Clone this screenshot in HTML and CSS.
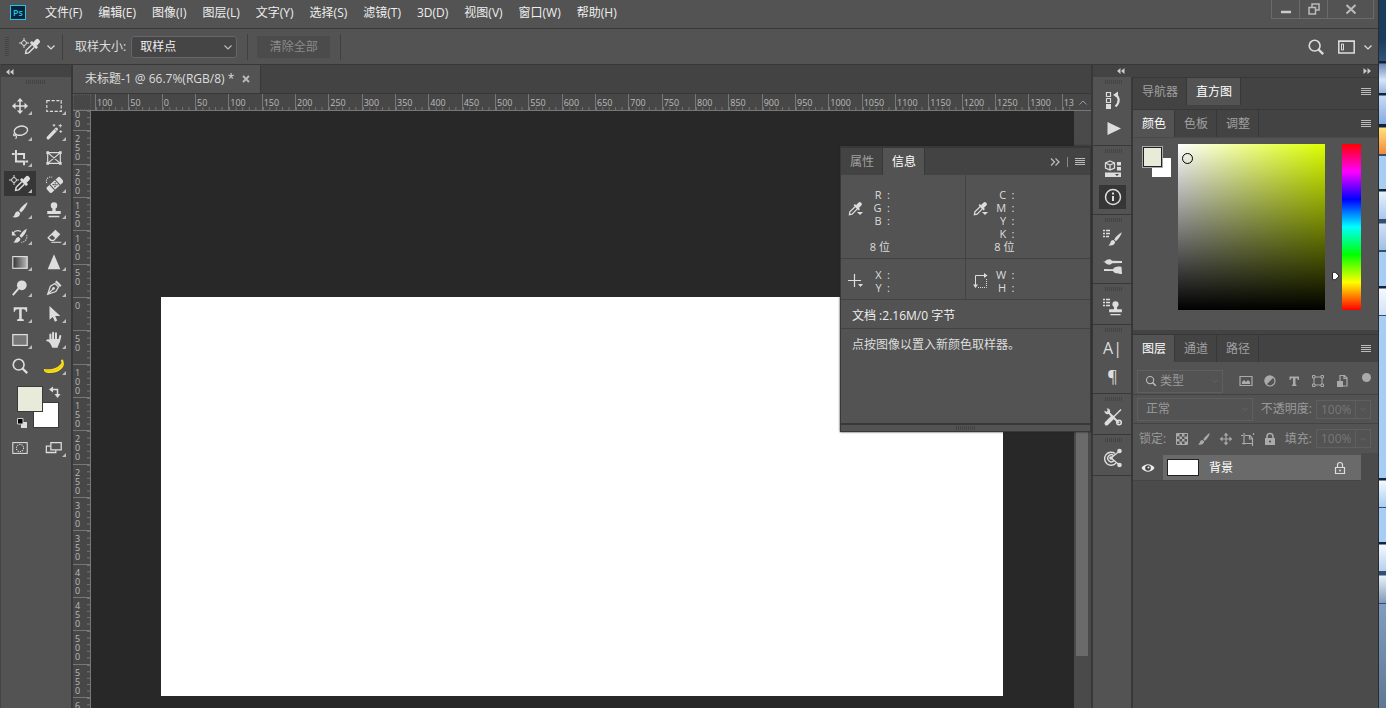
FILE: index.html
```html
<!DOCTYPE html>
<html lang="zh-CN">
<head>
    <meta charset="UTF-8">
    <meta name="viewport" content="width=device-width, initial-scale=1.0">
    <title>未标题-1</title>
    <link rel="stylesheet" href="styles.css">
</head>
<body>
    <!-- 公用图标 -->
    <svg class="symbols" aria-hidden="true">
        <symbol id="dropper" viewBox="0 0 16 16">
            <g transform="rotate(45 8 8)">
                <rect x="5.7" y="-2" width="4.6" height="7" rx="2.2" fill="currentColor"/>
                <rect x="3.8" y="4" width="8.4" height="2.4" rx="1" fill="currentColor"/>
                <path d="M6.2 6.5v8l1.8 2.6 1.8-2.6v-8" fill="none" stroke="currentColor" stroke-width="1.4"/>
            </g>
        </symbol>
        <symbol id="sampler" viewBox="0 0 22 20">
            <circle cx="5" cy="6" r="2.4" fill="none" stroke="currentColor"/>
            <path d="M5 1v3M5 8v3M0 6h3M7 6h3" stroke="currentColor"/>
            <g transform="translate(5 2)">
                <g transform="rotate(45 8 8)">
                    <rect x="5.5" y="-2" width="5" height="7" rx="2" fill="currentColor"/>
                    <rect x="3.5" y="3.800" width="9" height="2.800" rx="1" fill="currentColor"/>
                    <path d="M6.2 6.5v8l1.8 2.6 1.8-2.6v-8" fill="none" stroke="currentColor" stroke-width="1.4"/>
                </g>
            </g>
        </symbol>
        <symbol id="chevron" viewBox="0 0 8 8">
            <path d="M.5 2.5 4 6l3.500-3.500" fill="none" stroke="currentColor" stroke-width="1.200"/>
        </symbol>
        <symbol id="lines" viewBox="0 0 10 8">
            <path d="M0 .5h10M0 2.5h10M0 4.500h10M0 6.500h10" stroke="currentColor"/>
        </symbol>
        <symbol id="move" viewBox="0 0 20 20">
            <path d="M10 4v12M4 10h12" stroke="currentColor" stroke-width="1.700"/>
            <path d="M10 1l3.500 4h-7zM10 19l3.500-4h-7zM1 10l4-3.500v7zM19 10l-4-3.500v7z" fill="currentColor"/>
        </symbol>
        <symbol id="glass" viewBox="0 0 20 20">
            <circle cx="8.500" cy="8.500" r="6" fill="none" stroke="currentColor" stroke-width="1.800"/>
            <path d="M12.500 12.500 18 18" stroke="currentColor" stroke-width="2.600"/>
        </symbol>
        <symbol id="brush" viewBox="0 0 20 20">
            <path d="M18.500 1.500c-3 1.500-7.500 5.500-9.500 9l2.200 2.200c3.300-2.700 6.500-7.700 7.300-11.200z" fill="currentColor"/>
            <path d="M8 11.300c-2 0-3 1-3.600 2.800-.5 1.700-1.200 2.900-2.900 3.600 3.500 1.200 8.300.4 8.700-4.200z" fill="currentColor"/>
        </symbol>
        <symbol id="stamp" viewBox="0 0 20 20">
            <circle cx="10" cy="5" r="3.600" fill="currentColor"/>
            <path d="M8.500 7h3l.5 4h-4zM2.500 11h15v3.500h-15zM4 16.500h12V18H4z" fill="currentColor"/>
        </symbol>
    </svg>

    <div class="app">
        <header class="menubar">
            <svg class="logo" viewBox="0 0 16 15" aria-hidden="true">
                <rect x=".5" y=".5" width="15" height="14" fill="#06243a" stroke="#25c3e8"/>
                <text class="logo-text" x="3" y="11">Ps</text>
            </svg>
            <nav class="menus">
                <button>文件(F)</button>
                <button>编辑(E)</button>
                <button>图像(I)</button>
                <button>图层(L)</button>
                <button>文字(Y)</button>
                <button>选择(S)</button>
                <button>滤镜(T)</button>
                <button>3D(D)</button>
                <button>视图(V)</button>
                <button>窗口(W)</button>
                <button>帮助(H)</button>
            </nav>
            <div class="window-buttons">
                <button aria-label="最小化"><svg width="12" height="12" viewBox="0 0 12 12"><path d="M1 9h10" stroke="#ccc" stroke-width="2.500"/></svg></button>
                <button aria-label="还原"><svg width="12" height="12" viewBox="0 0 12 12"><path d="M4 4V1h7v6H8M1 4.500h6.500V11H1z" fill="none" stroke="#bbb" stroke-width="1.500"/></svg></button>
                <button class="close" aria-label="关闭"><svg width="12" height="12" viewBox="0 0 12 12"><path d="M1.500 2l9 8.500M10.500 2l-9 8.500" stroke="#bbb" stroke-width="2"/></svg></button>
            </div>
        </header>

        <div class="options">
            <span class="grip-v"></span>
            <button class="current-tool" aria-label="吸管工具">
                <svg width="22" height="20"><use href="#sampler"/></svg>
                <svg width="8" height="8"><use href="#chevron"/></svg>
            </button>
            <span class="sep"></span>
            <label class="options-label" for="sample-size">取样大小:</label>
            <div class="select sample">
                <select id="sample-size"><option>取样点</option></select>
                <svg class="arrow" width="8" height="8"><use href="#chevron"/></svg>
            </div>
            <span class="sep"></span>
            <button class="clear-all" disabled>清除全部</button>
            <span class="sep"></span>
            <div class="options-right">
                <button aria-label="搜索"><svg width="18" height="18"><use href="#glass"/></svg></button>
                <button aria-label="工作区"><svg width="17" height="14" viewBox="0 0 17 14"><path d="M.8 1h15.400v12H.8z" fill="none" stroke="currentColor" stroke-width="1.500"/><path d="M3.500 4h2v6h-2zM0 1.500h17" fill="none" stroke="currentColor"/></svg></button>
                <button aria-label="工作区列表"><svg width="8" height="8"><use href="#chevron"/></svg></button>
            </div>
        </div>

        <div class="workspace">
            <!-- 工具栏 -->
            <aside class="toolbar">
                <div class="collapse">
                    <svg width="8" height="6" viewBox="0 0 8 6"><path d="M3.500 0v6L0 3zM7.500 0v6L4 3z" fill="#ccc"/></svg>
                </div>
                <span class="grip"></span>
                <div class="tools">
                    <button class="tool more" aria-label="移动"><svg><use href="#move"/></svg></button>
                    <button class="tool more" aria-label="矩形选框"><svg viewBox="0 0 20 20"><rect x="2" y="4" width="16" height="12" fill="none" stroke="currentColor" stroke-width="1.300" stroke-dasharray="3.500 1.800"/></svg></button>
                    <button class="tool more" aria-label="套索"><svg viewBox="0 0 20 20"><ellipse cx="11" cy="8.500" rx="7.500" ry="5" transform="rotate(-12 11 8.500)" fill="none" stroke="currentColor" stroke-width="1.500"/><path d="M5 12c-2.500-.5-2.800 2-1 2.200 2 .2 2-2 .8-2.200M5.500 14c1 1 .8 2.500-.5 3.500" fill="none" stroke="currentColor" stroke-width="1.200"/></svg></button>
                    <button class="tool more" aria-label="魔棒"><svg viewBox="0 0 20 20"><path d="M3.500 16.500 12.500 7" stroke="currentColor" stroke-width="3.600" stroke-linecap="round"/><path d="M11 7l2 2" stroke="#535353"/><path d="M10 1v3M8.500 2.500h3M17 1v4M15 3h4M17.500 8v3M16 9.500h3" stroke="currentColor"/></svg></button>
                    <button class="tool more" aria-label="裁剪"><svg viewBox="0 0 20 20"><path d="M5.500 1v13H15M1 5.500h3M7 5.500h7.500V11M14.500 13v5M16 14h3" fill="none" stroke="currentColor" stroke-width="2.200"/></svg></button>
                    <button class="tool" aria-label="图框"><svg viewBox="0 0 20 20"><path d="M3 4h14v12H3zM3 4l14 12M17 4 3 16" fill="none" stroke="currentColor" stroke-width="1.300"/><path d="M1.500 2.500h3v3h-3zM15.500 2.500h3v3h-3zM1.500 14.500h3v3h-3zM15.500 14.500h3v3h-3z" fill="currentColor"/></svg></button>
                    <button class="tool more active" aria-label="吸管"><svg class="wide"><use href="#sampler"/></svg></button>
                    <button class="tool more" aria-label="污点修复画笔"><svg viewBox="0 0 20 20"><g transform="rotate(-42 11 11)"><rect x="1" y="7" width="20" height="8" rx="2" fill="currentColor"/><path d="M7 7v8M15 7v8" stroke="#535353" stroke-width="1.200"/><path d="M9 9.500h1.500M12 9.500h1.500M10.500 11h1.500M9 12.500h1.500M12 12.500h1.500" stroke="#444" stroke-width="1.300"/></g><path d="M2 9C0 5 4 1 8 2.500" fill="none" stroke="currentColor" stroke-width="1.300" stroke-dasharray="1.300 1.300"/></svg></button>
                    <button class="tool more" aria-label="画笔"><svg><use href="#brush"/></svg></button>
                    <button class="tool more" aria-label="仿制图章"><svg><use href="#stamp"/></svg></button>
                    <button class="tool more" aria-label="历史记录画笔"><svg viewBox="0 0 20 20"><path d="M17.500 2c-3 1.500-6.500 5-8 8l2 2C15 9.500 17 5.500 17.500 2zM8.500 11c-3.500 0-3 4.500-6 6 3 1 7.500.5 8-4z" fill="currentColor"/><path d="M2 7c2.500-3 6-3.500 9-2" fill="none" stroke="currentColor" stroke-width="1.400"/><path d="M1 4.500v5h5z" fill="currentColor"/><path d="M17.500 9c1 4-2 8-6 8" fill="none" stroke="currentColor" stroke-width="1.200" stroke-dasharray="1.300 1.300"/></svg></button>
                    <button class="tool more" aria-label="橡皮擦"><svg viewBox="0 0 20 20"><path d="M11.500 3l5.500 5-7 7.500H6L2.500 12z" fill="currentColor"/><path d="M4.500 11.800l2.800 2.500h2l2-2-3.500-3.500z" fill="#535353"/><path d="M7 17h11" stroke="currentColor" stroke-width="1.200"/></svg></button>
                    <button class="tool more" aria-label="渐变"><svg viewBox="0 0 20 20"><defs><linearGradient id="fade"><stop offset="0" stop-color="#333"/><stop offset="1" stop-color="#bbb"/></linearGradient></defs><rect x="2" y="4" width="16" height="13" fill="url(#fade)" stroke="currentColor" stroke-width="1.300"/></svg></button>
                    <button class="tool more" aria-label="锐化"><svg viewBox="0 0 20 20"><path d="M10 1.500 17 18H3z" fill="currentColor"/></svg></button>
                    <button class="tool more" aria-label="减淡"><svg viewBox="0 0 20 20"><circle cx="12" cy="7" r="5.400" fill="currentColor"/><path d="M8.500 10.500 2 18" stroke="currentColor" stroke-width="2.200"/></svg></button>
                    <button class="tool more" aria-label="钢笔"><svg viewBox="0 0 20 20"><path d="M3 17 6 8l5-3 4 4-3 5zM3 17l6-6" fill="none" stroke="currentColor" stroke-width="1.400"/><circle cx="9.500" cy="10.500" r="1.500" fill="currentColor"/><path d="M12 2.500 17.500 8" stroke="currentColor" stroke-width="2.500"/></svg></button>
                    <button class="tool more" aria-label="文字"><svg viewBox="0 0 20 20"><path d="M3 2.500h15v5h-1.400c-.3-2-1-2.700-4.700-2.700v10.600l2.300.7v1.700H6.800v-1.700l2.300-.7V4.800c-3.700 0-4.400.7-4.700 2.700H3z" fill="currentColor"/></svg></button>
                    <button class="tool more" aria-label="路径选择"><svg viewBox="0 0 20 20"><path d="M5 1v15.500l3.700-3.200 2.300 5.200 2.600-1.200-2.300-5H17z" fill="currentColor"/></svg></button>
                    <button class="tool more" aria-label="矩形"><svg viewBox="0 0 20 20"><rect x="2" y="4" width="16" height="12" fill="#777" stroke="currentColor" stroke-width="1.400"/></svg></button>
                    <button class="tool more" aria-label="抓手"><svg viewBox="0 0 20 20"><path d="M2.500 10.500c1.500-1 2.500.5 3.500 2M6 12V4M9 11V2M12.200 11V2.500M15.500 12 17 5.500" fill="none" stroke="currentColor" stroke-width="2.200" stroke-linecap="round"/><path d="M4.500 11.500 6 9h10.500c-.2 5-1.500 6.500-2.500 9.500H8c-.7-2.500-2.500-4.500-3.500-7z" fill="currentColor"/></svg></button>
                    <button class="tool" aria-label="缩放"><svg><use href="#glass"/></svg></button>
                    <button class="tool more" aria-label="编辑工具栏"><svg class="wide" viewBox="0 0 22 20"><path d="M1 13c7 1 14-.5 17.500-6l-.5-3 2-.4.8 3.400C22 12 14 18 5 17c-2.500-.4-4.600-1.500-4-4z" fill="#ffe21a"/><path d="M2 14.500c8 2 15-1.500 18-7" fill="none" stroke="#e8c400"/></svg></button>
                </div>
                <div class="swatch-tools">
                    <div class="swatches">
                        <button class="fg" aria-label="前景色"></button>
                        <button class="bg" aria-label="背景色"></button>
                        <svg class="default-colors" width="10" height="10" viewBox="0 0 10 10"><path d="M4 4h6v6H4z" fill="#ddd"/><path d="M.5.500h5.500v5.500H.5z" fill="#000" stroke="#ccc"/></svg>
                        <svg class="swap" width="12" height="12" viewBox="0 0 12 12"><path d="M3 3.500h5.500V9" fill="none" stroke="#ddd" stroke-width="1.500"/><path d="M0 3.500 4 .5v6zM8.500 12l-3-4h6z" fill="#ddd"/></svg>
                    </div>
                </div>
                <div class="tools">
                    <button class="tool" aria-label="快速蒙版"><svg viewBox="0 0 20 20"><rect x="2" y="4" width="16" height="12" fill="none" stroke="currentColor" stroke-width="1.200"/><circle cx="10" cy="10" r="4" fill="none" stroke="currentColor" stroke-width="1.200" stroke-dasharray="1.300 1.200"/></svg></button>
                    <button class="tool more" aria-label="屏幕模式"><svg viewBox="0 0 20 20"><path d="M6.500 4h11.500v8H6.500z" fill="none" stroke="currentColor" stroke-width="1.400"/><path d="M6 8H1.500v7H12v-2.500" fill="none" stroke="currentColor" stroke-width="1.400"/></svg></button>
                </div>
            </aside>

            <!-- 文档窗口 -->
            <main class="document">
                <div class="doc-tabs">
                    <div class="doc-tab">
                        <span>未标题-1 @ 66.7%(RGB/8) *</span>
                        <button aria-label="关闭文档"><svg width="8" height="8" viewBox="0 0 8 8"><path d="M1 1l6 6M7 1 1 7" stroke="#bbb" stroke-width="1.800"/></svg></button>
                    </div>
                </div>
                <div class="ruler-row">
                    <div class="corner"></div>
                    <div class="ruler-x">
                        <div class="ticks-x">
                            <span>100</span><span>50</span><span>0</span><span>50</span><span>100</span><span>150</span>
                            <span>200</span><span>250</span><span>300</span><span>350</span><span>400</span><span>450</span>
                            <span>500</span><span>550</span><span>600</span><span>650</span><span>700</span><span>750</span>
                            <span>800</span><span>850</span><span>900</span><span>950</span><span>1000</span><span>1050</span>
                            <span>1100</span><span>1150</span><span>1200</span><span>1250</span><span>1300</span><span>1350</span>
                        </div>
                    </div>
                    <div class="scroll-up"><svg width="8" height="5" viewBox="0 0 8 5"><path d="M.5 4.500 4 1l3.500 3.500" fill="none" stroke="#999"/></svg></div>
                </div>
                <div class="view">
                    <div class="ruler-y">
                        <div class="ticks-y">
                            <span>300</span><span>250</span><span>200</span><span>150</span><span>100</span><span>50</span><span>0</span>
                            <span>50</span><span>100</span><span>150</span><span>200</span><span>250</span><span>300</span><span>350</span>
                            <span>400</span><span>450</span><span>500</span><span>550</span><span>600</span><span>650</span><span>700</span>
                        </div>
                    </div>
                    <div class="canvas"><div class="artboard"></div></div>
                    <div class="scrollbar"><div class="thumb"></div></div>
                </div>

                <!-- 信息浮动面板 -->
                <section class="info">
                    <div class="tabs">
                        <button class="tab">属性</button>
                        <button class="tab active">信息</button>
                        <div class="tab-menu">
                            <svg width="10" height="8" viewBox="0 0 10 8"><path d="M1 .5 4.500 4 1 7.500M5.500.500 9 4 5.500 7.500" fill="none" stroke="currentColor" stroke-width="1.300"/></svg>
                            <span class="bar"></span>
                            <svg width="10" height="8"><use href="#lines"/></svg>
                        </div>
                    </div>
                    <div class="info-grid">
                        <div class="cell tall">
                            <svg width="16" height="16" viewBox="0 0 16 16"><use href="#dropper" width="14" height="14" y="1"/><path d="M9 11h6l-3 3z" fill="#ddd"/></svg>
                            <div class="readout"><span>R&ensp;:</span><span>G&ensp;:</span><span>B&ensp;:</span><span></span><span>8 位</span></div>
                        </div>
                        <div class="cell tall">
                            <svg width="16" height="16" viewBox="0 0 16 16"><use href="#dropper" width="14" height="14" y="1"/><path d="M9 11h6l-3 3z" fill="#ddd"/></svg>
                            <div class="readout"><span>C&ensp;:</span><span>M&ensp;:</span><span>Y&ensp;:</span><span>K&ensp;:</span><span>8 位</span></div>
                        </div>
                        <div class="cell">
                            <svg width="16" height="16" viewBox="0 0 16 16"><path d="M6.500 1v13M0 7.500h13" stroke="#ddd" stroke-width="1.200"/><path d="M10 11h5l-2.500 3z" fill="#ddd"/></svg>
                            <div class="readout"><span>X&ensp;:</span><span>Y&ensp;:</span></div>
                        </div>
                        <div class="cell">
                            <svg width="16" height="16" viewBox="0 0 16 16"><path d="M2.500 13V2.500H12" fill="none" stroke="#ddd"/><path d="M11 0l3.500 2.500L11 5zM0 11.500h5L2.500 15z" fill="#ddd"/><path d="M13.500 6v8.500H5" fill="none" stroke="#ddd" stroke-dasharray="1 1"/></svg>
                            <div class="readout"><span>W&ensp;:</span><span>H&ensp;:</span></div>
                        </div>
                    </div>
                    <p class="doc-size">文档 :2.16M/0 字节</p>
                    <p class="hint">点按图像以置入新颜色取样器。</p>
                    <div class="resize"><span class="grip"></span></div>
                </section>
            </main>

            <!-- 右侧面板 -->
            <aside class="side">
                <div class="side-head">
                    <svg width="8" height="6" viewBox="0 0 8 6"><path d="M3.500 0v6L0 3zM7.500 0v6L4 3z" fill="#ccc"/></svg>
                    <svg width="8" height="6" viewBox="0 0 8 6"><path d="M.5 0v6L4 3zM4.500 0v6L8 3z" fill="#ccc"/></svg>
                </div>
                <div class="side-body">
                    <div class="dock">
                        <div class="dock-group">
                            <button aria-label="历史记录"><svg viewBox="0 0 20 20"><path d="M3.500 2.500h4v4h-4zM3.500 8.500h4v4h-4z" fill="none" stroke="currentColor" stroke-width="1.200"/><path d="M3 14h5v5H3z" fill="currentColor"/><path d="M12 5c4 1 5.500 7 .5 11.500" fill="none" stroke="currentColor" stroke-width="2.200"/><path d="M10 5l5-3.500V8z" fill="currentColor"/></svg></button>
                            <button aria-label="动作"><svg viewBox="0 0 20 20"><path d="M4.500 4v13L18 10.500z" fill="currentColor"/></svg></button>
                        </div>
                        <div class="dock-group">
                            <button aria-label="属性"><svg viewBox="0 0 20 20"><path d="M7 2l4.500 2v5L7 11 2.500 9V4zM2.500 4 7 6l4.500-2M7 6v5" fill="none" stroke="currentColor" stroke-width="1.300"/><path d="M14 3h4v3.500h-4zM14 8h4v3.500h-4zM2 13.500h16V18H2z" fill="currentColor"/><path d="M12 15h4l-2 2z" fill="#444"/></svg></button>
                            <button class="active" aria-label="信息"><svg viewBox="0 0 20 20"><circle cx="10" cy="10" r="7.500" fill="none" stroke="currentColor" stroke-width="1.500"/><path d="M10 9v5M10 5.500v2" stroke="currentColor" stroke-width="2"/></svg></button>
                        </div>
                        <div class="dock-group">
                            <button aria-label="画笔设置"><svg viewBox="0 0 20 20"><path d="M0 2.500h2M3 2.500h4M0 5.500h2M3 5.500h4M0 8.500h2M3 8.500h3" stroke="currentColor" stroke-width="1.300"/><use href="#brush" x="4" y="3" width="16" height="16"/></svg></button>
                            <button aria-label="画笔"><svg viewBox="0 0 20 20"><path d="M0 5.500h2c2-3 6-3 7-.8L19 5v2l-10 .3C8 9.500 4 9 2 6.500zM1 13l9 .2c1-2.200 5-3.200 8.500-2.200l.5 7c-4 0-8-.8-9-3L1 15z" fill="currentColor"/></svg></button>
                        </div>
                        <div class="dock-group">
                            <button aria-label="仿制源"><svg viewBox="0 0 20 20"><path d="M0 2.500h2M3 2.500h4M0 5.500h2M3 5.500h4M0 8.500h2M3 8.500h4" stroke="currentColor" stroke-width="1.300"/><use href="#stamp" x="4" y="3" width="17" height="17"/></svg></button>
                        </div>
                        <div class="dock-group">
                            <button class="letter" aria-label="字符">A|</button>
                            <button class="letter" aria-label="段落">¶</button>
                        </div>
                        <div class="dock-group">
                            <button aria-label="工具预设"><svg viewBox="0 0 20 20"><path d="M4 4l12 12" stroke="currentColor" stroke-width="2"/><path d="M1.500 3.500 4 5.500 5.500 4 3.500 1.500C7 1 8 4 6.500 6.500 4.500 8 1 7 1.500 3.500z" fill="currentColor"/><circle cx="16" cy="15.500" r="2.300" fill="none" stroke="currentColor" stroke-width="1.500"/><path d="M18 2.500 10 10.500" stroke="currentColor" stroke-width="1.500"/><path d="M9.500 10.500 3.500 16.500" stroke="currentColor" stroke-width="4" stroke-linecap="round"/></svg></button>
                        </div>
                        <div class="dock-group">
                            <button aria-label="库"><svg viewBox="0 0 20 20"><path d="M12 5.500a6.500 6.500 0 1 0 1 9.500M10.500 7.500a3.500 3.500 0 1 0 .5 5" fill="none" stroke="currentColor" stroke-width="1.400"/><path d="M16 3.500 8 10l8.500 7" fill="none" stroke="currentColor" stroke-width="1.300"/><circle cx="16.500" cy="3" r="2.300" fill="currentColor"/><circle cx="8" cy="10" r="1.800" fill="currentColor"/><circle cx="16.500" cy="17" r="2.300" fill="currentColor"/></svg></button>
                        </div>
                    </div>

                    <div class="panels">
                        <section class="panel">
                            <div class="tabs">
                                <button class="tab">导航器</button>
                                <button class="tab active">直方图</button>
                                <div class="tab-menu"><svg width="10" height="8"><use href="#lines"/></svg></div>
                            </div>
                        </section>

                        <section class="panel">
                            <div class="tabs">
                                <button class="tab active">颜色</button>
                                <button class="tab">色板</button>
                                <button class="tab">调整</button>
                                <div class="tab-menu"><svg width="10" height="8"><use href="#lines"/></svg></div>
                            </div>
                            <div class="color-body">
                                <div class="color-swatches">
                                    <button class="fg" aria-label="前景色"></button>
                                    <button class="bg" aria-label="背景色"></button>
                                </div>
                                <div class="field"><span class="picker"></span></div>
                                <div class="hue">
                                    <svg class="hue-mark" width="8" height="10" viewBox="0 0 8 10"><path d="M.5 1.500q3-1.500 6.500 3.500-3.500 5-6.500 3.500z" fill="#fff" stroke="#222"/></svg>
                                </div>
                            </div>
                        </section>

                        <section class="panel layers">
                            <div class="tabs">
                                <button class="tab active">图层</button>
                                <button class="tab">通道</button>
                                <button class="tab">路径</button>
                                <div class="tab-menu"><svg width="10" height="8"><use href="#lines"/></svg></div>
                            </div>
                            <div class="layer-row filter">
                                <div class="select kind">
                                    <svg class="lens" width="12" height="12"><use href="#glass"/></svg>
                                    <select aria-label="图层过滤" disabled><option>类型</option></select>
                                    <svg class="arrow" width="6" height="6"><use href="#chevron"/></svg>
                                </div>
                                <div class="filter-icons">
                                    <svg viewBox="0 0 14 14"><path d="M1 2.500h12v9H1z" fill="none" stroke="currentColor" stroke-width="1.200"/><path d="M3 10V8l2-2 2 2 2-2 2 2v2z" fill="currentColor"/></svg>
                                    <svg viewBox="0 0 14 14"><circle cx="7" cy="7" r="5" fill="none" stroke="currentColor" stroke-width="1.200"/><path d="M3.500 10.500A5 5 0 1 1 10.500 3.500z" fill="currentColor"/></svg>
                                    <svg viewBox="0 0 14 14"><path d="M2.500 2.500h9.500V6h-1l-.8-1.700H8.500v6l1 .7v1H5v-1l1-.7v-6H4.300L3.500 6h-1z" fill="currentColor"/></svg>
                                    <svg viewBox="0 0 14 14"><path d="M3 3h8v8H3z" fill="none" stroke="currentColor"/><path d="M1.500 1.500h2.500v2.500H1.500zM10 1.500h2.500v2.500H10zM1.500 10h2.500v2.500H1.500zM10 10h2.500v2.500H10z" fill="#535353" stroke="currentColor"/></svg>
                                    <svg viewBox="0 0 14 14"><path d="M5 7V1.500h4.500L12 4v8H8M9 1.500V4.500h3" fill="none" stroke="currentColor" stroke-width="1.200"/><path d="M2 7h6v6H2z" fill="currentColor"/></svg>
                                </div>
                                <button class="filter-switch" aria-label="打开或关闭图层过滤" disabled></button>
                            </div>
                            <div class="layer-row">
                                <div class="select blend">
                                    <select aria-label="混合模式" disabled><option>正常</option></select>
                                    <svg class="arrow" width="6" height="6"><use href="#chevron"/></svg>
                                </div>
                                <label class="percent"><span>不透明度:</span><input type="text" value="100%" disabled></label>
                                <button class="drop" aria-label="不透明度滑块" disabled><svg width="6" height="6"><use href="#chevron"/></svg></button>
                            </div>
                            <div class="layer-row lock-row">
                                <span>锁定:</span>
                                <div class="lock-icons">
                                    <svg viewBox="0 0 14 14"><path d="M1.500 1.500h11v11h-11z" fill="none" stroke="currentColor"/><path d="M2 2h2.500v2.500H2zM7 2h2.500v2.500H7zM4.500 4.500H7V7H4.500zM9.500 4.500H12V7H9.500zM2 7h2.500v2.500H2zM7 7h2.500v2.500H7zM4.500 9.500H7V12H4.500zM9.500 9.500H12V12H9.500z" fill="currentColor"/></svg>
                                    <svg><use href="#brush"/></svg>
                                    <svg><use href="#move"/></svg>
                                    <svg viewBox="0 0 14 14"><path d="M3 1v11.500M0 3.500h2M4 3.500h5l2.500 3v5H1M8.500 3.500v3.500h3M12.500 1v2M11.500 11v3" fill="none" stroke="currentColor" stroke-width="1.200"/></svg>
                                    <svg viewBox="0 0 14 14"><path d="M4 6V4.500a3 3 0 0 1 6 0V6" fill="none" stroke="currentColor" stroke-width="1.600"/><path d="M2 6h10v7H2z" fill="currentColor"/><circle cx="7" cy="9.500" r="1" fill="#444"/></svg>
                                </div>
                                <label class="percent"><span>填充:</span><input type="text" value="100%" disabled></label>
                                <button class="drop" aria-label="填充滑块" disabled><svg width="6" height="6"><use href="#chevron"/></svg></button>
                            </div>
                            <div class="layer-list">
                                <div class="layer">
                                    <button class="eye" aria-label="显示图层"><svg width="14" height="12" viewBox="0 0 14 12"><path d="M.5 6C4 1 10 1 13.500 6 10 11 4 11 .5 6z" fill="#eee"/><circle cx="7" cy="6" r="2.800" fill="#444"/><circle cx="7.500" cy="5.500" r="1" fill="#eee"/></svg></button>
                                    <div class="layer-main">
                                        <span class="layer-thumb"></span>
                                        <span class="layer-name">背景</span>
                                        <svg width="12" height="14" viewBox="0 0 12 14"><path d="M3.500 6V4a2.500 2.500 0 0 1 5 0v2M1.500 6.500h9v6h-9z" fill="none" stroke="#ddd" stroke-width="1.200"/><circle cx="6" cy="9.500" r="1" fill="#ddd"/></svg>
                                    </div>
                                </div>
                            </div>
                        </section>
                    </div>
                </div>
            </aside>
        </div>
    </div>
    <div class="desktop"></div>
</body>
</html>
```
FILE: styles.css
```css
* {
    box-sizing: border-box;
}

html, body {
    height: 100%;
    margin: 0;
    overflow: hidden;
}

body {
    display: flex;
    background-color: #535353;
    color: #ddd;
    font-family: "Open Sans", "Noto Sans CJK SC", sans-serif;
    font-size: 12px;
    line-height: 16px;
}

button, select, input {
    margin: 0;
    padding: 0;
    border: none;
    border-radius: 0;
    background: none;
    color: inherit;
    font: inherit;
}

button {
    display: flex;
    align-items: center;
    justify-content: center;
}

p {
    margin: 0;
}

svg {
    display: block;
    flex: none;
}

.symbols {
    position: absolute;
    width: 0;
    height: 0;
}

.app {
    flex: 1;
    min-width: 0;
    display: flex;
    flex-direction: column;
    border-right: 1px solid #2b2b2b;
}

/* 菜单栏 */
.menubar {
    height: 29px;
    display: flex;
    align-items: flex-start;
    padding-left: 10px;
    border-bottom: 1px solid #383838;
}

.logo {
    width: 16px;
    height: 15px;
    margin-top: 5px;
}

.logo-text {
    font-size: 9px;
    font-weight: 600;
    fill: #25c3e8;
}

.menus {
    flex: 1;
    display: flex;
    gap: 16px;
    margin-left: 19px;
    padding-top: 5px;
    color: #eee;
}

.window-buttons {
    display: flex;
    height: 19px;
    margin-right: 4px;
    border: 1px solid #6a6a6a;
    border-top: none;
}

.window-buttons button {
    width: 28px;
    border-right: 1px solid #6a6a6a;
}

.window-buttons .close {
    width: 45px;
    border-right: none;
}

/* 选项栏 */
.options {
    height: 35px;
    display: flex;
    align-items: center;
    padding: 0 6px 0 5px;
}

.grip-v {
    width: 4px;
    height: 20px;
    background: repeating-linear-gradient(#444 0 1px, transparent 1px 2px);
}

.current-tool {
    gap: 6px;
    margin: 0 7px 0 10px;
}

.sep {
    width: 1px;
    height: 26px;
    margin: 0 9px 0 10px;
    background-color: #404040;
}

.current-tool + .sep {
    margin: 0 12px 0 0;
}

.options-label {
    margin-right: 5px;
}

.select {
    position: relative;
    display: flex;
    align-items: center;
    border: 1px solid #666;
}

.select select {
    width: 100%;
    height: 100%;
    appearance: none;
    opacity: 1;
}

.select .arrow {
    position: absolute;
    right: 4px;
    color: #bbb;
}

.sample {
    width: 106px;
    height: 22px;
    border-radius: 3px;
    background-color: #454545;
    color: #eee;
}

.sample select {
    padding-left: 8px;
}

.clear-all {
    width: 73px;
    height: 22px;
    background-color: #4b4b4b;
    color: #8a8a8a;
}

.options-right {
    display: flex;
    align-items: center;
    gap: 13px;
    margin-left: auto;
}

.options-right button:last-child {
    margin-left: -4px;
}

.workspace {
    flex: 1;
    min-height: 0;
    display: flex;
}

/* 工具栏 */
.toolbar {
    width: 73px;
    flex: none;
    display: flex;
    flex-direction: column;
    align-items: center;
    border-left: 1px solid #444;
    border-right: 2px solid #383838;
}

.collapse {
    width: 100%;
    height: 13px;
    padding: 4px 0 0 5px;
    background-color: #434343;
    border-top: 1px solid #383838;
}

.grip {
    width: 20px;
    height: 4px;
    margin: 3px 0 9px;
    background: repeating-linear-gradient(90deg, #434343 0 1px, transparent 1px 2px);
}

.tools {
    display: grid;
    grid-template-columns: 34px 34px;
    grid-auto-rows: 26px;
    justify-items: end;
    color: #ddd;
}

.tool {
    position: relative;
    width: 32px;
    height: 25px;
}

.tool svg {
    width: 18px;
    height: 18px;
}

.tool svg.wide {
    width: 22px;
    height: 20px;
}

.tool.active {
    background-color: #363636;
}

.tool.more::after {
    content: '';
    position: absolute;
    right: 4px;
    bottom: 3px;
    border: 2px solid transparent;
    border-right-color: #bbb;
    border-bottom-color: #bbb;
}

.swatch-tools {
    padding: 7px 0 7px 4px;
}

.swatches {
    position: relative;
    width: 42px;
    height: 42px;
}

.swatches button, .color-swatches button {
    position: absolute;
}

.swatches .fg {
    left: 0;
    top: 0;
    width: 26px;
    height: 26px;
    z-index: 1;
    background-color: #e8ebda;
    border: 1px solid #3a3a3a;
}

.swatches .bg {
    right: 0;
    bottom: 0;
    width: 26px;
    height: 26px;
    background-color: #fff;
    border: 1px solid #3a3a3a;
}

.default-colors {
    position: absolute;
    left: 0;
    bottom: 0;
}

.swap {
    position: absolute;
    right: -2px;
    top: 0;
}

/* 文档区 */
.document {
    position: relative;
    flex: 1;
    min-width: 0;
    display: flex;
    flex-direction: column;
}

.doc-tabs {
    height: 30px;
    display: flex;
    background-color: #434343;
    border-top: 1px solid #383838;
    border-bottom: 1px solid #383838;
}

.doc-tab {
    display: flex;
    align-items: center;
    gap: 8px;
    padding: 0 10px 0 12px;
    background-color: #535353;
    border-right: 1px solid #383838;
}

.ruler-row {
    height: 17px;
    display: flex;
    background-color: #474747;
    border-bottom: 1px solid #777;
    color: #bbb;
    font-size: 9px;
    line-height: 10px;
}

.corner {
    width: 18px;
    border: 1px dotted #5c5c5c;
}

.ruler-x {
    flex: 1;
    min-width: 0;
    padding-left: 4px;
    overflow: hidden;
}

.ticks-x {
    width: 1000px;
    height: 100%;
    display: grid;
    grid-template-columns: repeat(30, 1fr);
}

.ticks-x span {
    padding: 4px 0 0 1px;
    border-left: 1px solid #777;
    background: linear-gradient(90deg, #777 1px, transparent 1px) left bottom / 20% 3px repeat-x;
}

.scroll-up {
    width: 17px;
    display: flex;
    align-items: center;
    justify-content: center;
}

.view {
    flex: 1;
    min-height: 0;
    display: flex;
}

.ruler-y {
    width: 18px;
    overflow: hidden;
    background-color: #474747;
    border-right: 1px solid #777;
    color: #bbb;
    font-size: 9px;
    line-height: 9px;
}

.ticks-y {
    height: 700px;
    margin-top: -14px;
    display: grid;
    grid-template-rows: repeat(21, 1fr);
}

.ticks-y span {
    padding: 3px 10px 0 2px;
    border-top: 1px solid #777;
    word-break: break-all;
    min-height: 0;
    background: linear-gradient(#777 1px, transparent 1px) right top / 3px 20% repeat-y;
}

.canvas {
    flex: 1;
    display: flex;
    padding: 186px 71px 12px 70px;
    background-color: #282828;
}

.artboard {
    flex: 1;
    background-color: #fff;
}

.scrollbar {
    width: 17px;
    padding: 100px 3px 52px 2px;
    background-color: #4a4a4a;
}

.thumb {
    height: 100%;
    background-color: #6a6a6a;
}

/* 面板标签 */
.tabs {
    height: 28px;
    display: flex;
    background-color: #434343;
    border-top: 1px solid #383838;
}

.tab {
    padding: 0 8px 0 9px;
    border-right: 1px solid #383838;
    color: #a0a0a0;
}

.tab.active {
    background-color: #535353;
    color: #fff;
}

.tab-menu {
    display: flex;
    align-items: center;
    gap: 7px;
    margin-left: auto;
    padding-right: 7px;
    color: #bbb;
}

.bar {
    width: 1px;
    height: 10px;
    background-color: #888;
}

/* 信息面板 */
.info {
    position: absolute;
    top: 82px;
    right: 0;
    width: 251px;
    background-color: #535353;
    border: 1px solid #383838;
    box-shadow: 0 0 2px #222;
}

.info .tab-menu {
    padding-right: 5px;
}

.info-grid {
    display: grid;
    grid-template-columns: 1fr 1fr;
}

.cell {
    display: flex;
    align-items: center;
    padding: 9px 0 5px 7px;
    border-bottom: 1px solid #424242;
    border-right: 1px solid #424242;
    line-height: 13px;
}

.cell:nth-child(even) {
    border-right: none;
}

.tall {
    padding: 13px 0 5px 7px;
}

.tall svg {
    margin-bottom: 23px;
}

.readout {
    width: 26px;
    display: grid;
    grid-auto-rows: 13px;
    justify-items: end;
    font-size: 11px;
    white-space: nowrap;
}

.doc-size {
    padding: 8px 11px 4px;
    border-bottom: 1px solid #424242;
    color: #eee;
}

.hint {
    height: 94px;
    padding: 8px 11px;
}

.resize {
    height: 8px;
    display: flex;
    justify-content: center;
    border-top: 2px solid #383838;
}

.resize .grip {
    margin: 1px 0;
}

/* 右侧 */
.side {
    width: 287px;
    flex: none;
    display: flex;
    flex-direction: column;
    border-left: 2px solid #383838;
}

.side-head {
    height: 13px;
    display: flex;
    justify-content: space-between;
    align-items: center;
    padding: 0 7px 0 24px;
    background-color: #434343;
    border-top: 1px solid #383838;
}

.side-body {
    flex: 1;
    min-height: 0;
    display: flex;
}

.dock {
    width: 40px;
    border-right: 2px solid #383838;
}

.dock-group {
    padding: 9px 2px 3px 6px;
    border-bottom: 1px solid #383838;
    background: repeating-linear-gradient(90deg, #444 0 1px, transparent 1px 2px) 12px 3px / 18px 4px no-repeat;
}

.dock-group button {
    width: 27px;
    height: 28px;
}

.dock-group .active {
    background-color: #363636;
    border: solid #535353;
    border-width: 2px 0;
}

.dock-group svg {
    width: 20px;
    height: 20px;
}

.letter {
    font-size: 16px;
}

.panels {
    flex: 1;
    min-width: 0;
    display: flex;
    flex-direction: column;
    gap: 4px;
    background-color: #434343;
}

.panel {
    background-color: #535353;
}

.color-body {
    display: flex;
    padding: 6px 17px 20px 10px;
    border-top: 1px solid #4a4a4a;
}

.color-swatches {
    position: relative;
    width: 28px;
    height: 31px;
    margin: 3px 7px 0 0;
}

.color-swatches .fg {
    left: 0;
    top: 0;
    width: 19px;
    height: 20px;
    z-index: 1;
    background-color: #e8ebda;
    border: 1px solid #222;
    outline: 1px solid #aaa;
}

.color-swatches .bg {
    right: 0;
    bottom: 1px;
    width: 19px;
    height: 19px;
    background-color: #fff;
}

.field {
    position: relative;
    flex: 1;
    height: 166px;
    background: linear-gradient(transparent, #000), linear-gradient(90deg, #fff, #dcff00);
}

.picker {
    position: absolute;
    left: 4px;
    top: 9px;
    width: 11px;
    height: 11px;
    border: 1px solid #000;
    border-radius: 50%;
}

.hue {
    position: relative;
    width: 19px;
    margin-left: 17px;
    background: linear-gradient(#f00, #f0f, #00f, #0ff, #0f0, #ff0, #f00);
}

.hue-mark {
    position: absolute;
    left: -10px;
    top: 127px;
}

/* 图层面板 */
.layers {
    flex: 1;
    display: flex;
    flex-direction: column;
}

.layer-row {
    height: 29px;
    display: flex;
    align-items: center;
    padding: 0 7px 0 4px;
    border-bottom: 1px solid #444;
    color: #999;
}

.filter {
    height: 33px;
    padding-top: 6px;
}

.layer-row .select {
    height: 23px;
    border-color: #5f5f5f;
    color: #999;
}

.kind {
    width: 86px;
}

.kind select {
    padding-left: 22px;
}

.lens {
    position: absolute;
    left: 7px;
    color: #bbb;
}

.layer-row .arrow, .drop svg {
    color: #666;
}

.filter-icons, .lock-icons {
    display: flex;
    color: #aaa;
}

.filter-icons {
    gap: 10px;
    margin-left: 16px;
}

.filter-icons svg, .lock-icons svg {
    width: 14px;
    height: 14px;
}

.filter-switch {
    width: 9px;
    height: 9px;
    margin: 0 0 8px auto;
    border-radius: 50%;
    background-color: #aaa;
}

.blend {
    flex: 1;
}

.blend select {
    padding-left: 8px;
}

.percent {
    display: flex;
    align-items: center;
    gap: 4px;
    margin-left: 8px;
}

.percent input {
    width: 40px;
    height: 19px;
    padding: 0 4px;
    border: 1px solid #5f5f5f;
    color: #777;
}

.drop {
    width: 15px;
    height: 19px;
    border: 1px solid #5f5f5f;
    border-left: none;
}

.lock-row {
    border-bottom: none;
    padding-left: 6px;
}

.lock-icons {
    flex: 1;
    justify-content: space-between;
    margin: 0 0 0 9px;
}

.layer-list {
    flex: 1;
    padding-right: 17px;
    background-color: #4b4b4b;
}

.layer {
    height: 28px;
    display: flex;
    padding-top: 2px;
    border-bottom: 1px solid #444;
    background-color: #535353;
}

.eye {
    width: 30px;
}

.layer-main {
    flex: 1;
    display: flex;
    align-items: center;
    gap: 10px;
    padding: 0 15px 0 4px;
    background-color: #6a6a6a;
}

.layer-thumb {
    width: 32px;
    height: 17px;
    background-color: #fff;
    border: 1px solid #222;
}

.layer-name {
    flex: 1;
    color: #fff;
}

/* 窗口右侧露出的桌面 */
.desktop {
    width: 7px;
    background:
        linear-gradient(#1c3c5c 0 40px, #2e5578 61px, #10253c 61px 63px,
            #6f88b4 64px, #d5e5fb 80px, #9ab4dc 93px, #10253c 93px 95px,
            #c6dcf8 96px, #86a9df 124px, #10253c 124px 127px,
            #ffe27a 128px, #f08a3c 154px, #35506e 154px 156px,
            #a8cdf3 156px 189px, #10253c 189px 191px,
            #e8f1fc 192px, #a9c8ee 219px, #35506e 219px 223px,
            #cfe0f6 224px, #a0bfe6 250px, #35506e 250px 252px,
            #a8cdf3 252px 286px, #10253c 286px 288px,
            #f5f9fe 289px, #d0e2f8 315px, #35506e 315px 316px,
            #a8cdf3 316px 478px, #10253c 478px 480px,
            #f5f9fe 481px, #a8cdf3 507px, #35506e 507px 508px,
            #a8cdf3 508px 542px, #10253c 542px 544px,
            #f5f9fe 545px, #b5d0f0 571px, #35506e 571px 575px,
            #e8f1fc 576px, #8199b8 603px, #35506e 603px 604px,
            #7f9dc2 604px, #5f7793);
}
```
